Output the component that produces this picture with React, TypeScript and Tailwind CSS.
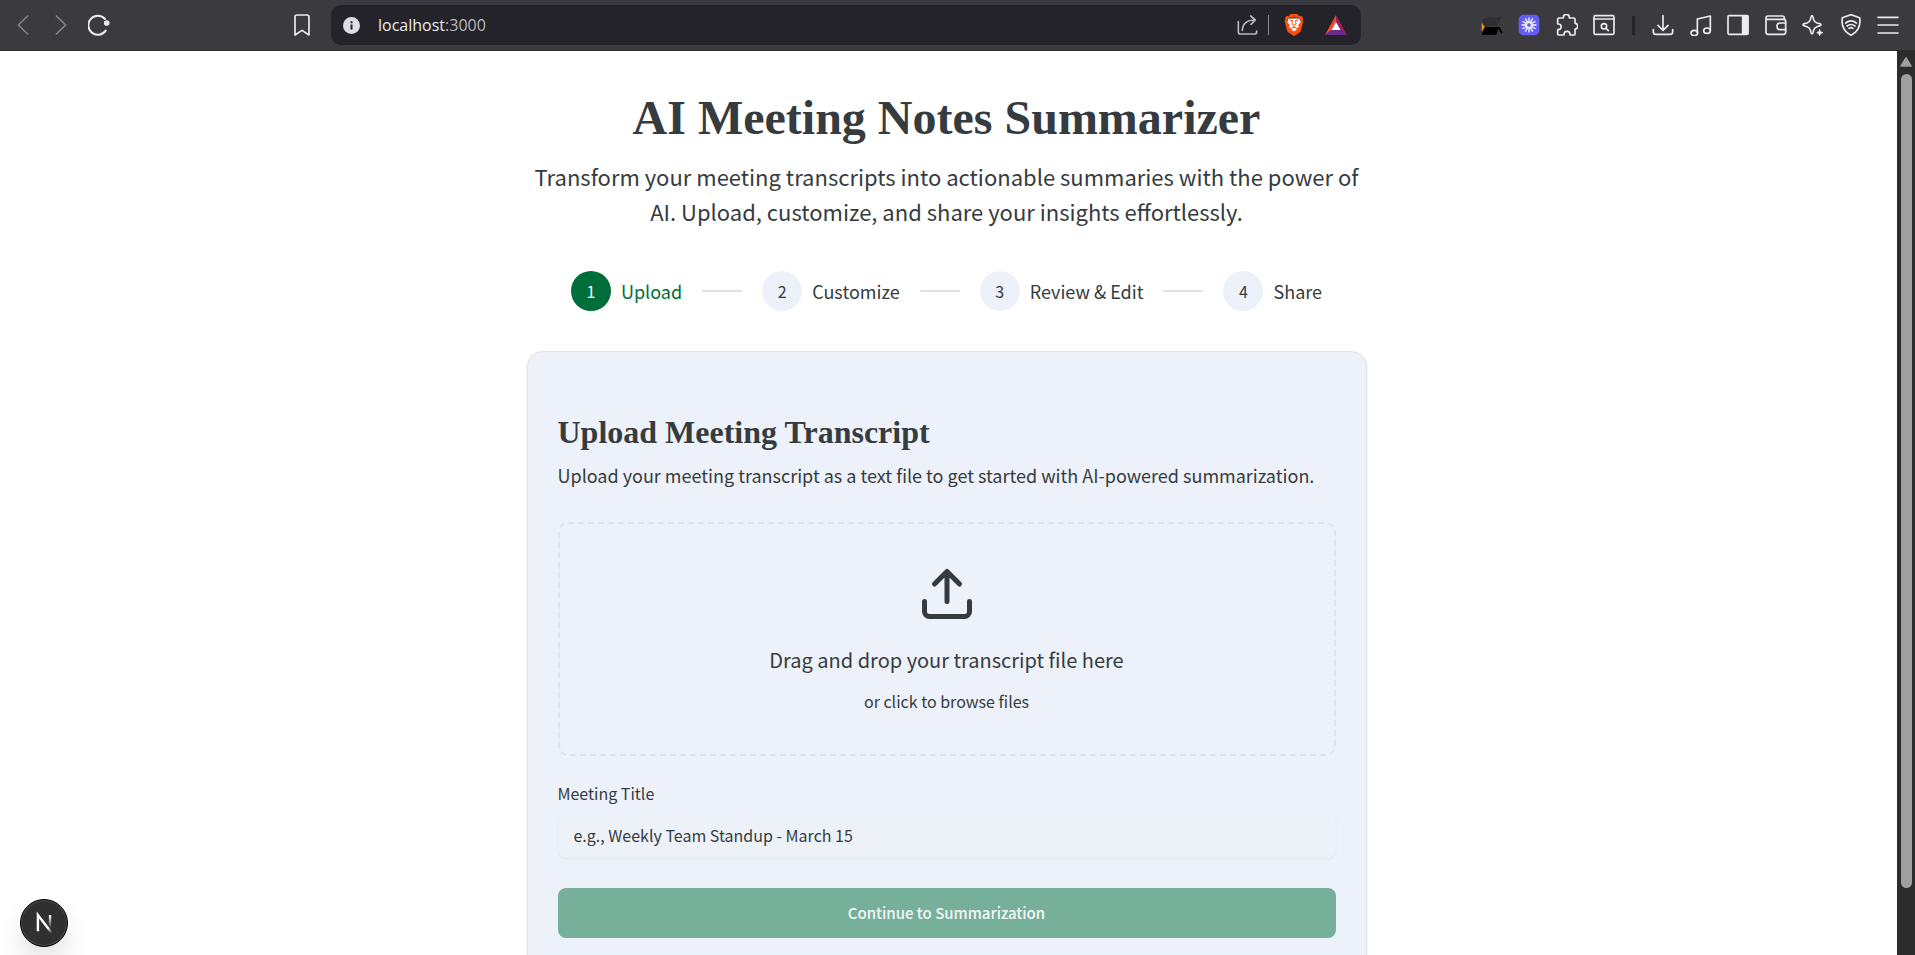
import { useState } from "react";
import type { ReactNode } from "react";
import { SiBrave } from "react-icons/si";

const line = {
  fill: "none",
  stroke: "currentColor",
  strokeWidth: 5,
  strokeLinecap: "round",
  strokeLinejoin: "round",
} as const;

function Glyph({ children }: { children: ReactNode }) {
  return (
    <svg viewBox="0 0 66 66" className="size-[22px] shrink-0" {...line} aria-hidden="true">
      {children}
    </svg>
  );
}

function IconButton({ label, className = "", children }: { label: string; className?: string; children: ReactNode }) {
  return (
    <button type="button" aria-label={label} className={`flex shrink-0 items-center justify-center ${className}`}>
      {children}
    </button>
  );
}

function BrowserBar() {
  const rays = Array.from({ length: 12 }, (_, i) => i * 30);
  return (
    <header className="flex h-[51px] shrink-0 items-center border-b border-[#2e2e31] bg-[#3b3a3f] text-[#ececf0]">
      <div className="flex w-[331px] shrink-0 items-center gap-4 pr-[18px] pl-3">
        <IconButton label="Back" className="text-[#85848a]">
          <Glyph><path d="M47 6 19 33l28 27" /></Glyph>
        </IconButton>
        <IconButton label="Forward" className="text-[#85848a]">
          <Glyph><path d="M19 6l28 27-28 27" /></Glyph>
        </IconButton>
        <IconButton label="Reload">
          <Glyph>
            <path d="M53 50A28.500 28.500 0 1 1 51 15" strokeWidth={6} />
            <circle cx="56" cy="27" r="8.500" fill="currentColor" stroke="none" />
          </Glyph>
        </IconButton>
        <IconButton label="Bookmark" className="ml-auto">
          <Glyph><path d="M12 9q0-6 6-6h30q6 0 6 6v54L33 49 12 63z" strokeWidth={5} /></Glyph>
        </IconButton>
      </div>

      <div className="flex h-10 min-w-0 flex-1 items-center rounded-[10px] bg-[#242329] pr-3.5 pl-3">
        <svg viewBox="0 0 17 17" className="size-[17px] shrink-0" role="img" aria-label="Site information">
          <circle cx="8.500" cy="8.500" r="8.500" fill="#dedde6" />
          <path d="M8.500 4.200v2M8.500 7.500v5" stroke="#242329" strokeWidth="2" />
        </svg>
        <p className="ml-[18px] flex-1 truncate font-['Open_Sans',sans-serif] text-[16px] leading-6 text-[#eceaf0]">
          localhost<span className="text-[#b9b7be]">:3000</span>
        </p>
        <IconButton label="Share this page" className="text-[#b9b8bd]">
          <Glyph>
            <path d="M7 23v31q0 6 6 6h43q6 0 6-6v-3" />
            <path d="M19 49C20 29 32 18 58 18M44 6l14 12-13 13" />
          </Glyph>
        </IconButton>
        <span className="ml-2.5 h-5 w-px bg-[#8b8a90]" />
        <IconButton label="Brave Shields" className="ml-3.5">
          <svg viewBox="0 0 24 24" className="h-6 w-[22px]" aria-hidden="true">
            <path d="M6 5h12l2 5-3 8-5 4-5-4-3-8z" fill="#fff" />
            <SiBrave size={24} color="#fb4f0c" />
          </svg>
        </IconButton>
        <IconButton label="Brave Rewards" className="ml-5">
          <svg viewBox="0 0 22 20" className="h-5 w-[22px]" aria-hidden="true">
            <path d="M11 0v7L6.500 15 0 20z" fill="#ff4724" />
            <path d="M11 0l11 20-6.500-5L11 7z" fill="#9e1f63" />
            <path d="M0 20l6.500-5h9L22 20z" fill="#662d91" />
            <path d="M11 7l4.500 8h-9z" fill="#fff" />
          </svg>
        </IconButton>
      </div>

      <nav aria-label="Browser tools" className="flex w-[554px] shrink-0 items-center justify-end pr-4">
        <div className="flex w-[134px] items-center justify-between">
          <IconButton label="Extension">
            <svg viewBox="0 0 66 66" className="size-[22px]" aria-hidden="true">
              <path d="M4 17l20-9 18 4 20-6-5 14-10 16H12z" fill="#303033" />
              <path d="M2 26l9 13-9 14z" fill="#f7931a" />
              <path d="M13 39h43l9 18-4 2-9-14-6 17H2l5-13z" fill="#000" />
            </svg>
          </IconButton>
          <IconButton label="Loom">
            <svg viewBox="0 0 66 66" className="size-[22px]" aria-hidden="true">
              <rect x="2" y="2" width="62" height="62" rx="15" fill="#625df5" />
              <g stroke="#fff" strokeWidth="4" strokeLinecap="round">
                {rays.map((a) => (
                  <path key={a} d="M33 24V12" transform={`rotate(${a} 33 33)`} />
                ))}
              </g>
              <circle cx="33" cy="33" r="8" fill="none" stroke="#fff" strokeWidth="4" />
            </svg>
          </IconButton>
          <IconButton label="Extensions">
            <Glyph>
              <path d="M5 16q0-4 4-4h13v-2a9 9 0 0 1 18 0v2h13q4 0 4 4v12a8 8.500 0 0 1 0 17v14q0 4-4 4H42v-2a9 9 0 0 0-18 0v2H9q-4 0-4-4V47h2a8.500 8.500 0 0 0 0-17H5z" />
            </Glyph>
          </IconButton>
          <IconButton label="Search tabs">
            <Glyph>
              <rect x="3" y="5" width="60" height="56" rx="4" />
              <path d="M3 15h60M39 43l7 7" />
              <circle cx="33" cy="37" r="8" />
            </Glyph>
          </IconButton>
        </div>
        <span className="mx-[17px] h-[19px] w-[3px] bg-[#242329]" />
        <div className="flex w-[247px] items-center justify-between">
          <IconButton label="Downloads">
            <Glyph><path d="M33 5v43M18 34l15 15 15-15M4 47v6q0 8 8 8h42q8 0 8-8v-6" /></Glyph>
          </IconButton>
          <IconButton label="Media">
            <Glyph>
              <path d="M22 57V15l39-9v43" />
              <ellipse cx="13" cy="57" rx="10" ry="8" />
              <ellipse cx="51" cy="50" rx="10" ry="8" />
            </Glyph>
          </IconButton>
          <IconButton label="Sidebar">
            <Glyph>
              <rect x="3" y="5" width="60" height="56" rx="3" />
              <path d="M47 6h15v54H47z" fill="currentColor" />
            </Glyph>
          </IconButton>
          <IconButton label="Wallet">
            <Glyph>
              <path d="M58 16v-4q0-6-6-6H9q-6 0-6 6v43q0 6 6 6h47q6 0 6-6V22q0-6-6-6H6" />
              <path d="M62 27H44q-8 0-8 10t8 10h18" />
            </Glyph>
          </IconButton>
          <IconButton label="Leo AI">
            <Glyph>
              <path d="M30 5c3 0 3 5 5 12 2 6 4 8 10 10 8 2 12 2 12 5s-5 4-12 6c-6 2-8 4-10 10-2 7-2 12-5 12s-3-5-5-12c-2-6-4-8-10-10C8 36 3 35 3 32s5-3 12-5c6-2 8-4 10-10 2-7 2-12 5-12z" />
              <path d="M53 47l3 6 7 3-7 3-3 6-3-6-6-3 6-3z" fill="currentColor" stroke="currentColor" strokeWidth={2} />
            </Glyph>
          </IconButton>
          <IconButton label="VPN">
            <Glyph>
              <path d="M33 2 59 11c4 25-5 42-26 53C12 53 3 36 7 11z" />
              <path d="M17 27q16-13 32 0M21 36q12-9 24 0M27 43q6-4 12 0" />
            </Glyph>
          </IconButton>
          <IconButton label="Menu">
            <Glyph><path d="M3 10h60M3 33h60M3 57h60" /></Glyph>
          </IconButton>
        </div>
      </nav>
    </header>
  );
}

const steps = ["Upload", "Customize", "Review & Edit", "Share"];

function Stepper({ current }: { current: number }) {
  return (
    <ol className="mt-[42px] flex items-center justify-center gap-5">
      {steps.map((name, i) => (
        <li key={name} className="flex items-center gap-5">
          {i > 0 && <span className="h-0.5 w-10 bg-[#dfe3e9]" />}
          <span className={`flex items-center gap-2.5 text-[18px] leading-7 ${i === current ? "text-[#006e3b]" : ""}`}>
            <span
              className={`flex size-10 items-center justify-center rounded-full text-[16px] leading-6 ${
                i === current ? "bg-[#006e3b] text-white" : "bg-[#edf2fa]"
              }`}
            >
              {i + 1}
            </span>
            {name}
          </span>
        </li>
      ))}
    </ol>
  );
}

function UploadCard() {
  const [title, setTitle] = useState("");
  return (
    <section className="mt-10 rounded-2xl border border-[#e0e4ea] bg-[#edf2fa] px-[30px] py-[60px] shadow-sm">
      <h2 className="font-['Liberation_Serif',serif] text-[32px] leading-10 font-bold">Upload Meeting Transcript</h2>
      <p className="mt-2 text-[18px] leading-[30px]">
        Upload your meeting transcript as a text file to get started with AI-powered summarization.
      </p>
      <label className="mt-8 flex cursor-pointer flex-col items-center rounded-[10px] border-2 border-dashed border-[#dfe4eb] py-10">
        <input type="file" accept=".txt" className="sr-only" />
        <svg
          viewBox="0 0 24 24"
          className="size-[60px]"
          fill="none"
          stroke="currentColor"
          strokeWidth="2"
          strokeLinecap="round"
          strokeLinejoin="round"
          aria-hidden="true"
        >
          <path d="M12 3v12M17 8l-5-5-5 5M21 15v4a2 2 0 0 1-2 2H5a2 2 0 0 1-2-2v-4" />
        </svg>
        <span className="mt-[18px] text-[20px] leading-[35px]">Drag and drop your transcript file here</span>
        <span className="mt-3 text-[16px] leading-[25px]">or click to browse files</span>
      </label>
      <label htmlFor="meeting-title" className="mt-[25px] block text-[16px] leading-[25px]">
        Meeting Title
      </label>
      <input
        id="meeting-title"
        value={title}
        onChange={(e) => setTitle(e.target.value)}
        placeholder="e.g., Weekly Team Standup - March 15"
        className="mt-[7px] block h-[45px] w-full rounded-lg border border-[#ecf0f7] bg-[#edf2f9] px-[15px] pb-0.5 text-[16px] shadow-xs outline-none placeholder:text-[#363b40]"
      />
      <button
        type="button"
        disabled
        className="mt-[30px] h-[50px] w-full rounded-lg bg-[#77b09a] text-[15px] font-medium text-[#f2f8f8]"
      >
        Continue to Summarization
      </button>
    </section>
  );
}

function DevBadge() {
  return (
    <button
      type="button"
      aria-label="Open Next.js Dev Tools"
      className="absolute bottom-2 left-5 size-12 rounded-full border border-black bg-[#303030] shadow-[inset_0_0_0_1px_#4a4a4a,0_16px_32px_-8px_#0000003d]"
    >
      <svg viewBox="2 2.400 36 36" className="size-full" fill="none" aria-hidden="true">
        <g transform="translate(12.9 13.2)" strokeWidth="1.86">
          <path d="M13.3 15.2 2.340 1v12.600" stroke="url(#diag)" />
          <path d="M11.825 1v12.100" stroke="url(#stem)" />
        </g>
        <defs>
          <linearGradient id="diag" x1="9.95" y1="11.1" x2="15.7" y2="17.2" gradientUnits="userSpaceOnUse">
            <stop stopColor="#fff" />
            <stop offset="0.6" stopColor="#fff" stopOpacity="0" />
          </linearGradient>
          <linearGradient id="stem" x1="11.8" y1="1.4" x2="11.79" y2="11" gradientUnits="userSpaceOnUse">
            <stop stopColor="#fff" />
            <stop offset="1" stopColor="#fff" stopOpacity="0" />
          </linearGradient>
        </defs>
      </svg>
    </button>
  );
}

function Scrollbar() {
  return (
    <div className="flex w-[18px] shrink-0 flex-col items-center bg-[#2c2c2c]" aria-hidden="true">
      <svg viewBox="0 0 12 10" className="mt-1.5 h-2.5 w-3 shrink-0">
        <path d="M6 1l5 8H1z" fill="#9f9f9f" stroke="#9f9f9f" strokeWidth="1.5" strokeLinejoin="round" />
      </svg>
      <div className="mt-[7px] h-[90%] w-[11px] rounded-full bg-[#9f9f9f]" />
    </div>
  );
}

export default function App() {
  return (
    <div className="flex h-screen flex-col overflow-hidden">
      <BrowserBar />
      <div className="relative flex min-h-0 flex-1">
        <main className="min-w-0 flex-1 overflow-hidden bg-white pt-[42px] pr-6 pl-5 font-['Noto_Sans_CJK_SC',sans-serif] text-[#363b40]">
          <div className="mx-auto max-w-[840px]">
            <h1 className="text-center font-['Liberation_Serif',serif] text-[48px] leading-[50px] font-bold">
              AI Meeting Notes Summarizer
            </h1>
            <p className="mt-4 text-center text-[22px] leading-[35px]">
              Transform your meeting transcripts into actionable summaries with the power of AI. Upload, customize, and
              share your insights effortlessly.
            </p>
            <Stepper current={0} />
            <UploadCard />
          </div>
        </main>
        <Scrollbar />
        <DevBadge />
      </div>
    </div>
  );
}
